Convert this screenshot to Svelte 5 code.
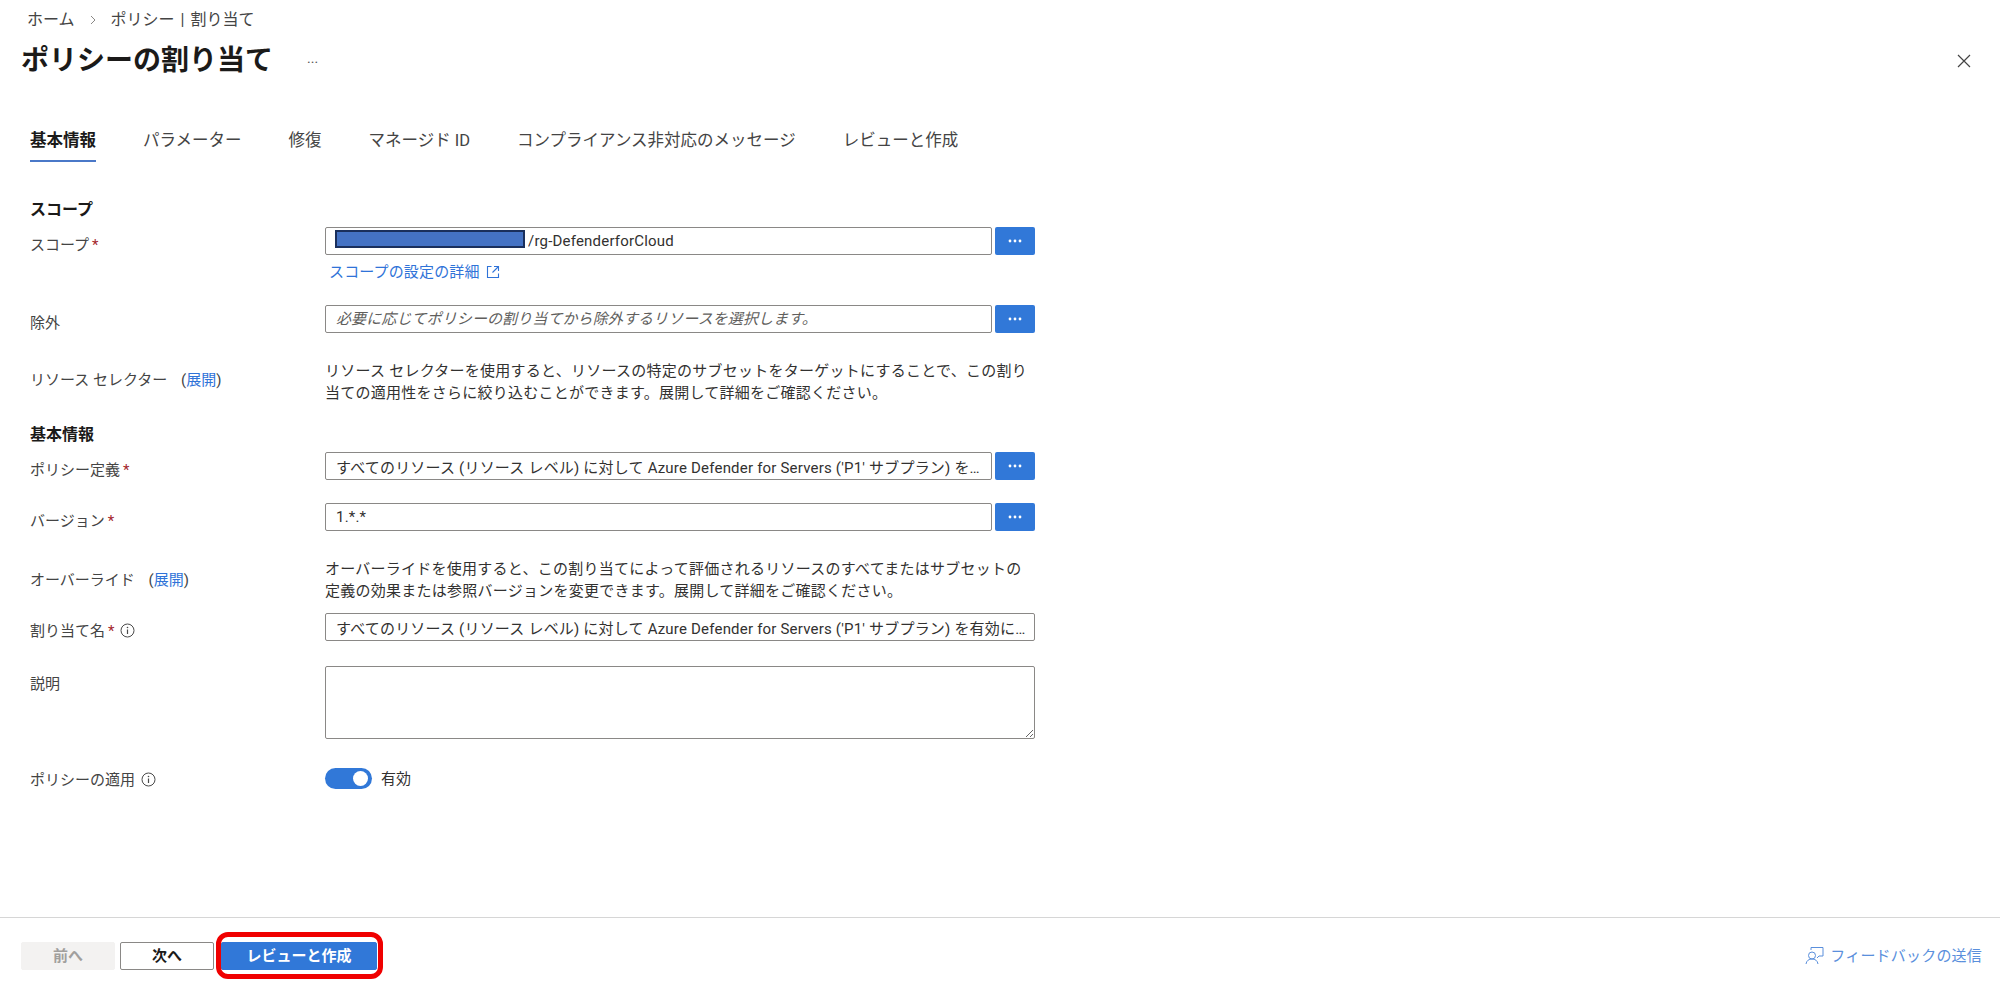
<script>
  const tabs = ["基本情報", "パラメーター", "修復", "マネージド ID", "コンプライアンス非対応のメッセージ", "レビューと作成"];
  const defName = "すべてのリソース (リソース レベル) に対して Azure Defender for Servers ('P1' サブプラン) を有効にする";
</script>

{#snippet info()}
  <svg class="info" viewBox="0 0 15 15" width="15" height="15" aria-hidden="true">
    <circle cx="7.5" cy="7.5" r="6.5" fill="none" stroke="#4a4a4a" stroke-width="1" />
    <path d="M7.500 6.500v4.500" stroke="#4a4a4a" stroke-width="1.2" fill="none" />
    <circle cx="7.5" cy="4.500" r=".8" fill="#4a4a4a" />
  </svg>
{/snippet}

{#snippet dots()}
  <button class="dots" type="button" aria-label="選択">
    <svg viewBox="0 0 16 4" width="16" height="4" aria-hidden="true">
      <circle cx="3" cy="2" r="1.4" fill="#fff" />
      <circle cx="8" cy="2" r="1.4" fill="#fff" />
      <circle cx="13" cy="2" r="1.4" fill="#fff" />
    </svg>
  </button>
{/snippet}

<div class="page">
  <header class="head">
    <nav class="crumbs">
      <span>ホーム</span>
      <svg viewBox="0 0 8 10" width="8" height="10" aria-hidden="true">
        <path d="M2 1l4 4-4 4" fill="none" stroke="#8a8886" stroke-width="1" />
      </svg>
      <span>ポリシー | 割り当て</span>
    </nav>
    <div class="title-row">
      <h1>ポリシーの割り当て</h1>
      <span class="more">...</span>
      <button class="close" type="button" aria-label="閉じる">
        <svg viewBox="0 0 14 14" width="14" height="14" aria-hidden="true">
          <path d="M1 1l12 12M13 1L1 13" stroke="#444" stroke-width="1.2" fill="none" />
        </svg>
      </button>
    </div>
  </header>

  <div class="tabs">
    {#each tabs as tab, i}
      <span class="tab" class:active={i === 0}>{tab}</span>
    {/each}
  </div>

  <main class="form">
    <h2>スコープ</h2>
    <div class="row mt6">
      <span class="label">スコープ<em>*</em></span>
      <div>
        <div class="field">
          <div class="scope">
            <input class="scope-input" readonly value="/rg-DefenderforCloud" />
            <div class="redact"></div>
          </div>
          {@render dots()}
        </div>
        <span class="link-row">
          <span class="link">スコープの設定の詳細</span>
          <svg viewBox="0 0 14 14" width="14" height="14" aria-hidden="true">
            <path d="M5.500 1.500h-4v11h11v-4M8 1.500h4.500V6M12.500 1.500L6.500 7.500" fill="none" stroke="#2f73d8" stroke-width="1.1" />
          </svg>
        </span>
      </div>
    </div>

    <div class="row mt22">
      <span class="label">除外</span>
      <div class="field">
        <input readonly placeholder="必要に応じてポリシーの割り当てから除外するリソースを選択します。" />
        {@render dots()}
      </div>
    </div>

    <div class="row center mt26">
      <span class="label raised">リソース セレクター <i class="open">(<span class="link">展開</span>)</i></span>
      <p>リソース セレクターを使用すると、リソースの特定のサブセットをターゲットにすることで、この割り当ての適用性をさらに絞り込むことができます。展開して詳細をご確認ください。</p>
    </div>

    <h2 class="mt20">基本情報</h2>
    <div class="row mt6">
      <span class="label">ポリシー定義<em>*</em></span>
      <div class="field">
        <input readonly value={defName} />
        {@render dots()}
      </div>
    </div>

    <div class="row mt22">
      <span class="label">バージョン<em>*</em></span>
      <div class="field">
        <input readonly value="1.*.*" />
        {@render dots()}
      </div>
    </div>

    <div class="row center mt26">
      <span class="label">オーバーライド <i class="open">(<span class="link">展開</span>)</i></span>
      <p>オーバーライドを使用すると、この割り当てによって評価されるリソースのすべてまたはサブセットの定義の効果または参照バージョンを変更できます。展開して詳細をご確認ください。</p>
    </div>

    <div class="row mt11">
      <span class="label">割り当て名<em>*</em> {@render info()}</span>
      <input class="name-input" readonly value={defName} />
    </div>

    <div class="row mt24">
      <span class="label">説明</span>
      <textarea></textarea>
    </div>

    <div class="row center mt27">
      <span class="label lowered">ポリシーの適用 {@render info()}</span>
      <div class="toggle-wrap">
        <span class="toggle"><span class="knob"></span></span>
        <span>有効</span>
      </div>
    </div>
  </main>

  <footer class="foot">
    <button class="btn disabled" type="button">前へ</button>
    <button class="btn" type="button">次へ</button>
    <span class="marked">
      <button class="btn primary" type="button">レビューと作成</button>
      <span class="marker"></span>
    </span>
    <span class="feedback">
      <svg viewBox="0 0 20 20" width="20" height="20" aria-hidden="true">
        <path d="M6 4V1.500h12V10h-4l-2 2" fill="none" stroke="#5a8fdc" stroke-width="1" />
        <circle cx="7" cy="9.500" r="3.500" fill="none" stroke="#5a8fdc" stroke-width="1" />
        <path d="M1 18c.5-3.500 3-5 6-5s5.500 1.500 6 5" fill="none" stroke="#5a8fdc" stroke-width="1" />
      </svg>
      <span>フィードバックの送信</span>
    </span>
  </footer>
</div>

<style>
  :global(body) {
    margin: 0;
    background: #fff;
  }

  * {
    box-sizing: border-box;
  }

  .page {
    height: 985px;
    display: flex;
    flex-direction: column;
    font-family: Roboto, "Noto Sans CJK JP", sans-serif;
    font-size: 15px;
    line-height: 22px;
    color: #323130;
  }

  /* header */
  .head {
    padding: 9px 0 0 21px;
  }
  .crumbs {
    display: flex;
    align-items: center;
    gap: 14px;
    padding-left: 6px;
    font-size: 16px;
    word-spacing: 2px;
    color: #444;
  }
  .title-row {
    display: flex;
    align-items: center;
    height: 40px;
    margin-top: 10px;
  }
  h1 {
    margin: 0;
    font-size: 28px;
    font-weight: 700;
    color: #1b1a19;
  }
  .more {
    margin: -6px 0 0 34px;
    color: #555;
    font-size: 14px;
  }
  .close {
    margin-left: auto;
    margin-right: 29px;
    padding: 0;
    border: 0;
    background: none;
    height: 14px;
  }

  /* tabs */
  .tabs {
    display: flex;
    gap: 47px;
    padding-left: 30px;
    margin-top: 49px;
  }
  .tab {
    height: 32px;
    font-size: 16.5px;
    color: #444;
  }
  .tab.active {
    font-weight: 700;
    color: #1b1a19;
    border-bottom: 2px solid #4a78c8;
  }

  /* form */
  .form {
    padding-left: 30px;
    margin-top: 37px;
  }
  h2 {
    margin: 0;
    font-size: 16px;
    font-weight: 700;
    line-height: 22px;
    color: #1b1a19;
  }
  .row {
    display: grid;
    grid-template-columns: 295px 710px;
  }
  .row.center {
    align-items: center;
  }
  .label {
    padding-top: 7px;
    color: #444;
  }
  .center .label {
    padding-top: 0;
  }
  .center .label.raised {
    padding-bottom: 5px;
  }
  .center .label.lowered {
    padding-top: 3px;
  }
  em {
    color: #a4262c;
    font-style: normal;
    margin-left: 3px;
  }
  .open {
    font-style: normal;
    margin-left: 10px;
  }
  .info {
    vertical-align: -2px;
    margin-left: 2px;
  }
  .link {
    color: #2f73d8;
  }
  p {
    margin: 0;
    letter-spacing: 0.25px;
    color: #323130;
  }
  .field {
    display: flex;
    gap: 3px;
  }
  input {
    flex: 1;
    min-width: 0;
    width: 100%;
    height: 28px;
    padding: 0 10px;
    border: 1px solid #8a8886;
    border-radius: 2px;
    font: inherit;
    letter-spacing: 0.2px;
    color: #323130;
    background: #fff;
    text-overflow: ellipsis;
    outline: none;
  }
  input::placeholder {
    font-style: italic;
    letter-spacing: 0.1px;
    color: #605e5c;
    opacity: 1;
  }
  .name-input {
    padding-right: 3px;
  }
  textarea {
    display: block;
    width: 100%;
    height: 73px;
    border: 1px solid #8a8886;
    border-radius: 2px;
    outline: none;
  }
  .dots {
    flex: none;
    width: 40px;
    height: 28px;
    padding: 0;
    border: 0;
    border-radius: 2px;
    background: #3178d8;
    display: flex;
    align-items: center;
    justify-content: center;
  }

  .scope {
    position: relative;
    flex: 1;
    display: flex;
  }
  .scope-input {
    padding-left: 202px;
  }
  .redact {
    position: absolute;
    left: 10px;
    top: 3px;
    width: 190px;
    height: 18px;
    background: #4472c4;
    border: 2px solid #1a2f5c;
  }
  .link-row {
    display: flex;
    align-items: center;
    gap: 6px;
    margin: 6px 0 0 4px;
    letter-spacing: 0.15px;
  }

  .toggle-wrap {
    display: flex;
    align-items: center;
    gap: 9px;
  }
  .toggle {
    width: 47px;
    height: 21px;
    padding: 0 4px;
    border-radius: 11px;
    background: #3178d8;
    display: flex;
    align-items: center;
    justify-content: flex-end;
  }
  .knob {
    width: 15px;
    height: 15px;
    border-radius: 50%;
    background: #fff;
  }

  .mt6 { margin-top: 6px; }
  .mt11 { margin-top: 11px; }
  .mt20 { margin-top: 20px; }
  .mt22 { margin-top: 22px; }
  .mt24 { margin-top: 24px; }
  .mt26 { margin-top: 26px; }
  .mt27 { margin-top: 27px; }

  /* footer */
  .foot {
    margin-top: auto;
    height: 68px;
    border-top: 1px solid #d6d6d6;
    display: flex;
    align-items: center;
    gap: 5px;
    padding: 9px 18px 0 21px;
  }
  .btn {
    width: 94px;
    height: 28px;
    padding: 0;
    border: 1px solid #8a8886;
    border-radius: 2px;
    background: #fff;
    font: inherit;
    font-size: 15px;
    font-weight: 700;
    color: #1b1a19;
  }
  .btn.disabled {
    border-color: #f3f2f1;
    background: #f3f2f1;
    color: #a19f9d;
  }
  .marked {
    position: relative;
    display: flex;
    margin-left: 2px;
  }
  .btn.primary {
    width: 156px;
    border-color: #3178d8;
    background: #3178d8;
    color: #fff;
  }
  /* red annotation frame drawn over the button */
  .marker {
    position: absolute;
    inset: -10px -6px -9px -5px;
    border: 5px solid #f00000;
    border-radius: 12px;
    pointer-events: none;
  }
  .feedback {
    margin-left: auto;
    display: flex;
    align-items: center;
    gap: 5px;
    letter-spacing: 0.2px;
    color: #5a8fdc;
  }
</style>
